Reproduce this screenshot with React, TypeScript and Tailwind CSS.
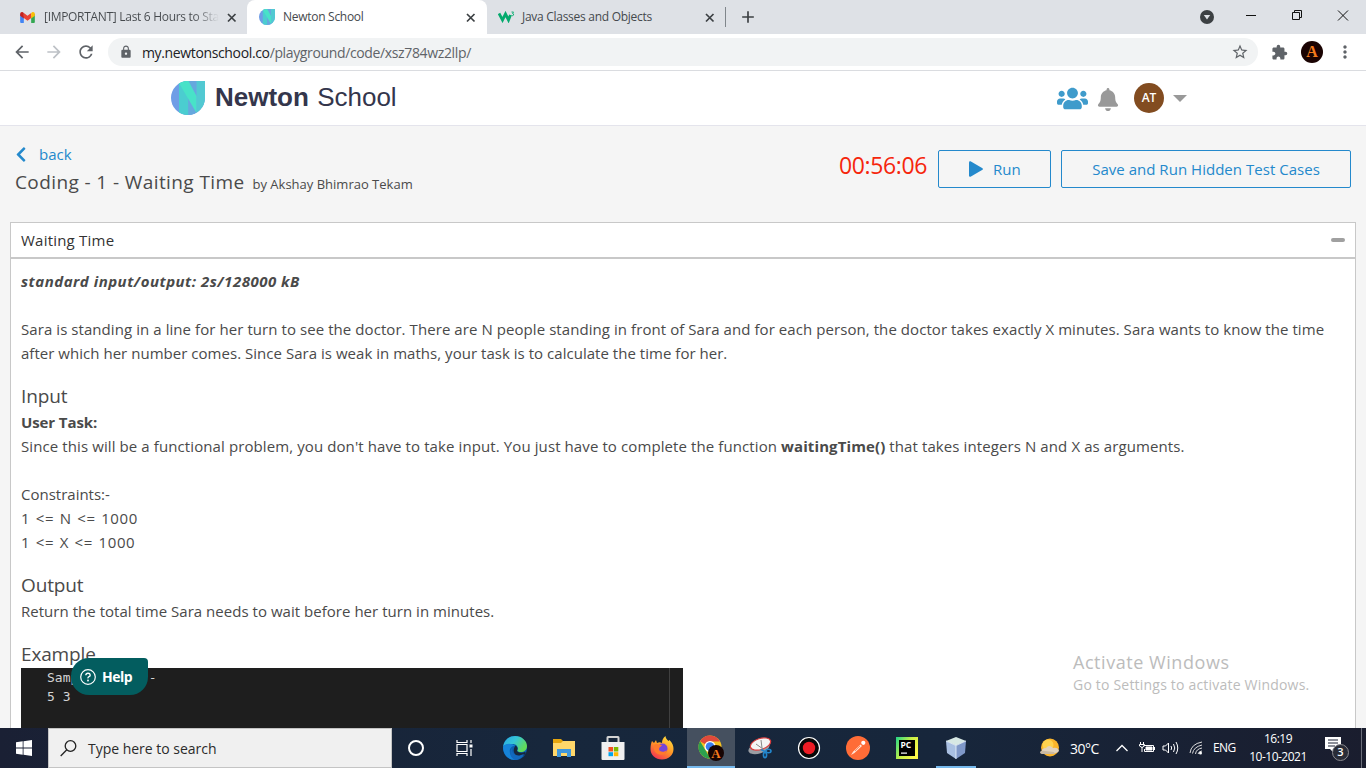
import React from 'react';
import { FaUsers, FaBell, FaChevronLeft } from 'react-icons/fa';
import { MdArrowBack, MdArrowForward, MdRefresh, MdLock, MdStarBorder, MdExtension, MdMoreVert, MdAdd } from 'react-icons/md';

function NewtonLogo({ className }: { className?: string }) {
  return (
    <svg viewBox="0 0 34 34" className={className}>
      <defs>
        <clipPath id="leaf"><path d="M17 0H34V17A17 17 0 1 1 17 0Z" /></clipPath>
      </defs>
      <g clipPath="url(#leaf)">
        <rect width="34" height="34" fill="#6f9de6" />
        <rect x="8" width="9.5" height="34" fill="#4bcdd0" />
        <rect x="17.5" width="8" height="34" fill="#66a8de" />
        <rect x="25.5" width="9" height="34" fill="#52c9d2" />
        <path d="M8 0H17.5L25.500 15V32L8 2Z" fill="#48e2c8" />
      </g>
    </svg>
  );
}

function GmailIcon() {
  return (
    <svg viewBox="0 0 16 12" className="h-[11px] w-[15px]">
      <path d="M0 2v9a1 1 0 0 0 1 1h3V5z" fill="#4285f4" />
      <path d="M16 2v9a1 1 0 0 1-1 1h-3V5z" fill="#34a853" />
      <path d="M4 1v5.5L8 9.5l4-3V1L8 4.2z" fill="#ea4335" />
      <path d="M0 2.2V4l4 3V1L2.9.4C1.500-.4 0 .6 0 2.200z" fill="#c5221f" />
      <path d="M16 2.200V4l-4 3V1l1.100-.6C14.500-.4 16 .6 16 2.200z" fill="#fbbc04" />
    </svg>
  );
}

function W3Icon() {
  return (
    <svg viewBox="0 0 17 12" className="h-3 w-[17px]" fill="none" stroke="#04aa6d">
      <path d="M1 2.500L4.500 9L7.500 3L10.500 9L12.500 4" strokeWidth="2.800" />
      <path d="M13.500 1h2l-1 1.500q1.600 0 1 1.500t-2 .4" strokeWidth=".9" />
    </svg>
  );
}

function TabClose() {
  return (
    <svg viewBox="0 0 13 13" className="h-[13px] w-[13px] shrink-0" fill="none" stroke="#3c4043" strokeWidth="1.700">
      <path d="M3 3l7.500 7.500M10.500 3L3 10.500" />
    </svg>
  );
}

function TabStrip() {
  return (
    <div className="flex h-[34px] bg-[#dee1e6] text-[12px] text-[#45494d]">
      <div className="flex w-[247px] items-center rounded-br-lg pl-[20px]">
        <GmailIcon />
        <div className="ml-[9px] w-[175px] overflow-hidden whitespace-nowrap bg-gradient-to-r from-[#45494d] from-85% to-[#dee1e6] bg-clip-text tracking-[-0.3px] text-transparent">[IMPORTANT] Last 6 Hours to Start</div>
        <div className="ml-[6px]"><TabClose /></div>
      </div>
      <div className="flex w-[240px] items-center rounded-t-lg bg-white pl-[12px]">
        <NewtonLogo className="h-4 w-4" />
        <div className="ml-[8px] w-[176px] whitespace-nowrap tracking-[-0.28px]">Newton School</div>
        <div className="ml-[5px]"><TabClose /></div>
      </div>
      <div className="flex w-[239px] items-center pl-[11px]">
        <W3Icon />
        <div className="ml-[7px] w-[176px] whitespace-nowrap tracking-[-0.28px]">Java Classes and Objects</div>
        <div className="ml-[5px]"><TabClose /></div>
        <div className="ml-[9px] h-5 w-px bg-[#80868b]" />
      </div>
      <div className="flex flex-1 items-center pl-[12px]">
        <MdAdd className="h-[20px] w-[20px] text-[#3c4043]" />
      </div>
      <div className="flex w-[176px] items-center pl-[10px]">
        <svg viewBox="0 0 14 14" className="h-[14px] w-[14px]">
          <circle cx="7" cy="7" r="7" fill="#3c4043" />
          <path d="M3.800 5h6.400L7 9.600z" fill="#dee1e6" />
        </svg>
        <svg viewBox="0 0 110 16" className="mb-[5px] ml-[30px] h-4 w-[110px]" fill="none" stroke="#111" strokeWidth="1">
          <path d="M2 8.500h10M48.500 5.500h7v7h-7zM50.500 5V3.500h7v7H56M94 3.500l10 10M104 3.500l-10 10" />
        </svg>
      </div>
    </div>
  );
}

function Toolbar() {
  return (
    <div className="flex h-[37px] items-center border-b border-[#dadce0] bg-white pl-[12px] text-[#5f6368]">
      <MdArrowBack className="h-5 w-5" />
      <MdArrowForward className="ml-[12px] h-5 w-5 text-[#bdc1c6]" />
      <MdRefresh className="ml-[12px] h-5 w-5" />
      <div className="ml-[12px] flex h-[28px] w-[1150px] items-center rounded-full bg-[#f1f3f4] pl-[11px] text-[14px]">
        <MdLock className="h-[14px] w-[14px]" />
        <div className="ml-[9px] whitespace-nowrap tracking-[-0.36px]"><span className="text-[#202124]">my.newtonschool.co</span>/playground/code/xsz784wz2llp/</div>
        <MdStarBorder className="ml-auto mr-[9px] h-[18px] w-[18px]" />
      </div>
      <MdExtension className="ml-[13px] h-[17px] w-[17px]" />
      <div className="ml-[13px] flex h-[22px] w-[22px] items-center justify-center rounded-full bg-[#1a0302] font-['Liberation_Serif',serif] text-[16px] leading-none font-bold text-[#f47a1c]">A</div>
      <MdMoreVert className="ml-[12px] h-5 w-5" />
    </div>
  );
}

function SiteHeader() {
  return (
    <div className="flex h-[55px] items-center border-b border-[#e4e4ec] bg-white pl-[171px]">
      <NewtonLogo className="h-[34px] w-[34px]" />
      <div className="ml-[10px] w-[842px] pb-[2px] font-['Liberation_Sans',sans-serif] text-[26px] leading-none whitespace-nowrap text-[#34364c]"><b>Newton</b> <span className="ml-px">School</span></div>
      <FaUsers className="h-[31px] w-[31px] text-[#3f9bcb]" />
      <FaBell className="mt-[2px] ml-[9px] h-[23px] w-[22px] text-[#999]" />
      <div className="ml-[15px] flex h-[30px] w-[30px] items-center justify-center rounded-full bg-[#824c20] text-[12px] font-semibold text-white">AT</div>
      <svg viewBox="0 0 14 7" className="ml-[9px] h-[7px] w-[14px]"><path d="M0 0h14L7 7z" fill="#999" /></svg>
    </div>
  );
}

function ActionBar() {
  return (
    <div className="flex h-[96px] px-[15px]">
      <div className="pt-[16px]">
        <div className="flex h-[24px] items-center text-[15px] text-[#2489cc]">
          <FaChevronLeft className="h-[17px] w-[12px]" />
          <span className="ml-[12px]">back</span>
        </div>
        <div className="flex h-[32px] items-baseline whitespace-nowrap text-[#4a4a4a]">
          <span className="text-[19px] leading-[32px] tracking-[0.4px]">Coding - 1 - Waiting Time</span>
          <span className="ml-[8px] text-[13px]">by Akshay Bhimrao Tekam</span>
        </div>
      </div>
      <div className="ml-auto flex pt-[24px]">
        <div className="w-[99px] text-[23px] leading-[30px] tracking-[-0.38px] whitespace-nowrap text-[#f5260c]">00:56:06</div>
        <button className="flex h-[38px] w-[113px] items-center rounded-[2px] border border-[#2489cc] pl-[30px] text-[15px] text-[#2489cc]">
          <svg viewBox="0 0 14 16" className="h-4 w-[14px]"><path d="M0 1.500Q0 0 1.500.300L13.500 7.200q.8.800 0 1.600L1.500 15.700Q0 16 0 14.500z" fill="#2489cc" /></svg>
          <span className="ml-[10px]">Run</span>
        </button>
        <button className="ml-[10px] h-[38px] w-[290px] rounded-[2px] border border-[#2489cc] text-[15px] tracking-[0.03px] whitespace-nowrap text-[#2489cc]">Save and Run Hidden Test Cases</button>
      </div>
    </div>
  );
}

function Heading({ children }: { children: React.ReactNode }) {
  return <h3 className="h-[45px] pt-[19px] text-[19px] leading-[24px] tracking-[-0.15px]">{children}</h3>;
}

function Problem() {
  return (
    <div className="mx-[10px] flex flex-1 flex-col overflow-hidden border-x border-t border-[#c8c8c8] bg-white">
      <div className="flex h-[36px] shrink-0 items-center border-b-2 border-[#c8c8c8] px-[10px] text-[15px] tracking-[0.22px] text-[#333]">
        <span>Waiting Time</span>
        <div className="mb-px ml-auto h-[4px] w-[14px] rounded-sm bg-[#a0a0a0]" />
      </div>
      <div className="px-[10px] pt-[10px] text-[15px] leading-[24px] whitespace-nowrap text-[#4a4a4a]">
        <p className="mb-6 font-bold tracking-[0.5px] italic">standard input/output: 2s/128000 kB</p>
        <p className="tracking-[0.07px]">Sara is standing in a line for her turn to see the doctor. There are N people standing in front of Sara and for each person, the doctor takes exactly X minutes. Sara wants to know the time</p>
        <p className="tracking-[0.03px]">after which her number comes. Since Sara is weak in maths, your task is to calculate the time for her.</p>
        <Heading>Input</Heading>
        <p className="font-bold tracking-[-0.1px]">User Task:</p>
        <p className="tracking-[0.1px]">Since this will be a functional problem, you don't have to take input. You just have to complete the function <b>waitingTime()</b> that takes integers N and X as arguments.</p>
        <p className="mt-6">Constraints:-</p>
        <p className="tracking-[0.6px] [word-spacing:1.1px]">1 &lt;= N &lt;= 1000</p>
        <p className="tracking-[0.6px] [word-spacing:1.1px]">1 &lt;= X &lt;= 1000</p>
        <Heading>Output</Heading>
        <p className="tracking-[0.03px]">Return the total time Sara needs to wait before her turn in minutes.</p>
        <Heading>Example</Heading>
        <div className="flex h-[60px] w-[662px] bg-[#1e1e1e]">
          <pre className="w-[649px] border-r border-[#404040] pl-[26px] font-['DejaVu_Sans_Mono',monospace] text-[13px] leading-[19px] text-[#d4d4d4]">{'Sample Input:-\n5 3'}</pre>
        </div>
      </div>
    </div>
  );
}

function EdgeIcon() {
  return (
    <svg viewBox="0 0 24 24" className="h-6 w-6">
      <defs>
        <linearGradient id="edgeTop" x1="0" y1="0" x2="1" y2=".5"><stop offset="0" stopColor="#2aa5e0" /><stop offset=".5" stopColor="#35c5d8" /><stop offset="1" stopColor="#62db58" /></linearGradient>
      </defs>
      <circle cx="12" cy="12" r="12" fill="#0b5fae" />
      <path d="M0 11C1 4 6 0 12 0c7 0 12 5 12 10 0 4-3 6-6 6-3 0-4-1-3.500-2 1-2 0-6-5-6C5 8 1 9 0 11z" fill="url(#edgeTop)" />
      <path d="M0 11c2-4 9-4 12-1-4 0-6 3-5 7 1 4 4 6.500 7 6.700C6 25 0 19 0 11z" fill="#1683d8" />
      <path d="M12.500 9.500c3 2 2 4 1.500 5 0 2 4 3 8 1.500l1 1c-2 3-5 4-8 3-4-1-6-6-2.500-10.500z" fill="#17273c" />
      <path d="M9 12c-1 5 4 9 9 7l3-1c-2 4-6 6-9 6-5-2-6-8-3-12z" fill="#1268bd" />
    </svg>
  );
}

function FolderIcon() {
  return (
    <svg viewBox="0 0 22 18" className="h-[18px] w-[22px]">
      <path d="M0 0h8l2 2h12v15H0z" fill="#e5a50e" />
      <path d="M0 4h8l2-2h12v15H0z" fill="#ffd76a" />
      <path d="M4 18v-8h14v8h-4v-4H8v4z" fill="#3f97dc" />
    </svg>
  );
}

function StoreIcon() {
  return (
    <svg viewBox="0 0 24 24" className="h-6 w-6">
      <path d="M6.500 7V1.500Q6.500 1 7 1H17Q17.500 1 17.500 1.500V7" fill="none" stroke="#d4d4d4" strokeWidth="2" />
      <path d="M.5 6h23v17q0 1-1 1h-21q-1 0-1-1z" fill="#f0f0f0" />
      <path d="M7.500 11H12v4.500H7.500z" fill="#f25022" /><path d="M12.800 11h4.500v4.500h-4.500z" fill="#7fba00" />
      <path d="M7.500 16.200H12v4H7.500z" fill="#00a4ef" /><path d="M12.800 16.200h4.500v4h-4.500z" fill="#ffb900" />
    </svg>
  );
}

function FirefoxIcon() {
  return (
    <svg viewBox="0 0 24 24" className="h-6 w-6">
      <defs><linearGradient id="fox" x1=".8" y1="0" x2=".2" y2="1"><stop offset="0" stopColor="#ffe23e" /><stop offset=".5" stopColor="#ff9426" /><stop offset="1" stopColor="#f22c55" /></linearGradient></defs>
      <path d="M2 5l2 2 2-3 1 3c2-1 3-1 5 0 0-3 1-5 3.500-7 0 2 1 3 3 5l1-1c3 3 4 6 4 9 0 6-5 10.500-11.500 10.500S.5 19 .5 13C.5 10 1 7 2 5z" fill="url(#fox)" />
      <circle cx="12.500" cy="12.500" r="5" fill="#7545d8" />
      <path d="M4 9c3-2 5 0 8 0-1 2-3 2-3 4 0 3 5 4 8 1-1 4-5 6-9 4-3-1-5-5-4-9z" fill="#ff7a2c" />
    </svg>
  );
}

function ChromeIcon() {
  return (
    <svg viewBox="0 0 26 26" className="h-[26px] w-[26px]">
      <circle cx="12" cy="12" r="11.500" fill="#f4c020" />
      <path d="M12 12L2 6.200A11.500 11.500 0 0 1 22 6.500H12z" fill="#e04a3c" />
      <path d="M2 6.200L8 16l4 7.500A11.500 11.500 0 0 1 2 6.200z" fill="#2da04e" />
      <circle cx="12" cy="11.500" r="5.500" fill="#fff" /><circle cx="12" cy="11.500" r="4.300" fill="#3b7ded" />
      <circle cx="18" cy="18" r="8" fill="#160403" />
      <text x="18" y="22.800" textAnchor="middle" fontSize="13" fontWeight="bold" fontFamily="Liberation Serif" fill="#f47a1c">A</text>
    </svg>
  );
}

function SnipIcon() {
  return (
    <svg viewBox="0 0 24 24" className="h-6 w-6">
      <ellipse cx="11" cy="12" rx="11" ry="5.500" transform="rotate(-18 11 12)" fill="#9a9da3" />
      <ellipse cx="12.500" cy="8" rx="10.500" ry="5.500" transform="rotate(-18 12.500 8)" fill="#f4f4f4" stroke="#d93c3c" strokeWidth="1.200" />
      <path d="M8 8l7 5M13 4l1 8" stroke="#888" strokeWidth="1" />
      <g fill="none" stroke="#2286cc" strokeWidth="1.600"><ellipse cx="20.500" cy="15" rx="2.500" ry="1.700" /><ellipse cx="17" cy="19" rx="1.600" ry="2.600" /><path d="M13 13.500l5 2.500" /></g>
    </svg>
  );
}

function RecordIcon() {
  return (
    <svg viewBox="0 0 24 24" className="h-6 w-6">
      <circle cx="12" cy="12" r="10.500" fill="#080808" stroke="#fff" strokeWidth="1.200" />
      <circle cx="12" cy="12" r="6.200" fill="#ed1c24" />
    </svg>
  );
}

function PostmanIcon() {
  return (
    <svg viewBox="0 0 24 24" className="h-6 w-6">
      <circle cx="12" cy="12" r="12" fill="#ff6c37" />
      <path d="M5 19l2-3.200 7.500-7.300 1.500 1.500-7.500 7z" fill="#ffe4d8" />
      <circle cx="17.300" cy="6.800" r="2.100" fill="#fff" /><path d="M9 15l5-5" stroke="#ff6c37" strokeWidth=".7" />
    </svg>
  );
}

function PycharmIcon() {
  return (
    <svg viewBox="0 0 22 22" className="h-[22px] w-[22px]">
      <defs><linearGradient id="pc" x1="0" y1="0" x2="1" y2=".6"><stop offset="0" stopColor="#21d789" /><stop offset=".55" stopColor="#c8ef45" /><stop offset="1" stopColor="#fcf84a" /></linearGradient></defs>
      <rect width="22" height="22" fill="url(#pc)" /><rect x="3" y="3" width="16" height="16" fill="#000" />
      <text x="4.500" y="11" fontSize="8.500" fontWeight="bold" fontFamily="Open Sans" fill="#fff">PC</text>
      <rect x="5" y="15.500" width="6" height="1.200" fill="#fff" />
    </svg>
  );
}

function CubeIcon() {
  return (
    <svg viewBox="0 0 22 24" className="h-6 w-[22px]">
      <path d="M11 1l10 4-10 4.500L1 5z" fill="#d7e8e4" /><path d="M1 5l10 4.500V23L2 17z" fill="#a9c0e2" />
      <path d="M21 5l-10 4.500V23l9-6z" fill="#7f98c8" /><path d="M1 5l10 4.500L21 5M11 9.500V23" fill="none" stroke="#eef6ff" strokeWidth=".8" />
    </svg>
  );
}

function AppSlot({ children }: { children: React.ReactNode }) {
  return <div className="flex h-10 w-[49px] items-center justify-center">{children}</div>;
}

function Taskbar() {
  return (
    <div className="flex h-10 items-center bg-[linear-gradient(90deg,#1a2034,#17273c_40%,#17263b_70%,#1a1d2e)] text-white">
      <div className="flex w-[48px] justify-center">
        <svg viewBox="0 0 16 16" className="h-4 w-4" fill="#fff"><path d="M0 2.300L6.700 1.300V7.600H0zM7.500 1.200L16 0v7.600H7.500zM0 8.400h6.700v6.300L0 13.700zM7.500 8.400H16V16l-8.500-1.200z" /></svg>
      </div>
      <div className="flex h-10 w-[344px] items-center border border-[#c4c4c4] bg-[#f0f0f0] pl-[11px] text-[#2b2b2b]">
        <svg viewBox="0 0 17 17" className="h-[17px] w-[17px]" fill="none" stroke="#222" strokeWidth="1.300"><circle cx="10.500" cy="6" r="5.300" /><path d="M6.800 9.800L.7 16" /></svg>
        <span className="ml-[11px] text-[14px] tracking-[-0.02px] whitespace-nowrap">Type here to search</span>
      </div>
      <div className="flex w-[48px] justify-center"><div className="h-4 w-4 rounded-full border-2 border-white" /></div>
      <div className="mr-[2px] flex w-[48px] justify-center">
        <svg viewBox="0 0 17 16" className="h-4 w-[17px]" fill="none" stroke="#fff" strokeWidth="1.200"><path d="M1 4.500h10v7H1zM1 0v2.500h10V0M1 16v-2.500h10V16M15 0v3M15 9v7" /><path d="M13.500 4.500h3v3h-3z" fill="#fff" stroke="none" /></svg>
      </div>
      <AppSlot><EdgeIcon /></AppSlot>
      <AppSlot><FolderIcon /></AppSlot>
      <AppSlot><StoreIcon /></AppSlot>
      <AppSlot><FirefoxIcon /></AppSlot>
      <div className="ml-px flex h-10 w-[48px] items-center justify-center border-y-2 border-t-[#45505f] border-b-[#76b9ed] bg-[#45505f]"><ChromeIcon /></div>
      <AppSlot><SnipIcon /></AppSlot>
      <AppSlot><RecordIcon /></AppSlot>
      <AppSlot><PostmanIcon /></AppSlot>
      <AppSlot><PycharmIcon /></AppSlot>
      <div className="ml-[5px] flex h-10 w-[40px] items-center justify-center border-y-2 border-t-transparent border-b-[#76b9ed]"><CubeIcon /></div>
      <div className="ml-auto flex h-10 items-center whitespace-nowrap">
        <svg viewBox="0 0 20 20" className="h-5 w-5"><circle cx="10" cy="9.500" r="9" fill="#fbb52c" /><circle cx="8" cy="7" r="5.500" fill="#ffd34f" /><path d="M2 14q-1-4 4-4 3-4 7 0 5-1 6 3-1 2-4 2z" fill="#e2d3bd" /><path d="M0 14q1-2 5-1l9 1 1 2H3q-3 0-3-2z" fill="#c9b9a2" /></svg>
        <span className="ml-[10px] w-[46px] text-[14px] tracking-[-0.5px]">30°C</span>
        <svg viewBox="0 0 12 8" className="h-2 w-3" fill="none" stroke="#fff" strokeWidth="1.300"><path d="M.5 7L6 1.500 11.500 7" /></svg>
        <svg viewBox="0 0 16 14" className="ml-[11px] h-[14px] w-4" fill="none" stroke="#fff"><path d="M4.500 4.500h10v6h-9V8" /><path d="M7 6h6v3H7z" fill="#fff" /><path d="M15.500 6v3M1.500 1v2M4.500 1v2M.5 3.500h5v1.500L3 6.500.5 5zM3 6v5" /></svg>
        <svg viewBox="0 0 17 14" className="ml-[7px] h-[14px] w-[17px]" fill="none" stroke="#fff"><path d="M1 5h2.500L6.500 2v10L3.500 9H1zM9 5q1.300 2 0 4M11.500 3q2.500 4 0 8M14 1q3.500 6 0 12" /></svg>
        <svg viewBox="0 0 14 14" className="ml-[10px] h-[14px] w-[14px]" fill="none" stroke="#ddd"><path d="M1 12Q2 3 13 1M3.500 12.500Q4.500 6 13 4M6.500 13Q7 8 13 7M9 13q1-3 4-3" /><circle cx="11.500" cy="12" r="1.500" fill="#fff" stroke="none" /></svg>
        <span className="ml-[10px] w-[35px] text-[12px] tracking-[-0.6px]">ENG</span>
        <div className="w-[60px] text-center text-[12px] leading-[18px] tracking-[-0.5px]"><div>16:19</div><div>10-10-2021</div></div>
        <div className="relative mt-px ml-[17px] h-6 w-[24px]">
          <svg viewBox="0 0 16 15" className="h-[15px] w-4"><path d="M0 0h16v12H8v3l-3-3H0z" fill="#fff" /><path d="M3 3h10M3 6h10M3 9h7" stroke="#1a2034" /></svg>
          <div className="absolute top-[7px] left-[7px] flex h-[17px] w-[17px] items-center justify-center rounded-full border border-[#8a8a90] bg-[#292c37] text-[11px] font-semibold">3</div>
        </div>
        <div className="mr-[4px] ml-[12px] h-10 w-px bg-[#6b6e7a]" />
      </div>
    </div>
  );
}

export default function App() {
  return (
    <div className="relative flex h-screen w-screen flex-col overflow-hidden bg-[#f5f5f5] font-['Open_Sans',sans-serif]">
      <TabStrip />
      <Toolbar />
      <SiteHeader />
      <ActionBar />
      <Problem />
      <Taskbar />
      <div className="absolute top-[658px] left-[71px] flex h-[37px] w-[77px] items-center rounded-[18px] rounded-tr-[4px] bg-[#035d5f] pl-[9px] text-white">
        <svg viewBox="0 0 16 16" className="h-4 w-4" fill="none" stroke="#fff" strokeWidth="1.200"><circle cx="8" cy="8" r="7.300" /><path d="M5.800 6.300q.2-2 2.200-2t2.200 1.700q0 1.200-1.200 1.700T8 9.300" strokeWidth="1.400" /><circle cx="8" cy="11.500" r=".4" /></svg>
        <span className="mb-px ml-[6px] text-[14px] font-bold tracking-[-0.5px]">Help</span>
      </div>
      <div className="absolute top-[650px] left-[1073px] whitespace-nowrap text-[#bcbcbc]">
        <div className="text-[18px] leading-[25px] tracking-[0.55px]">Activate Windows</div>
        <div className="text-[14px] leading-[20px] tracking-[0.2px]">Go to Settings to activate Windows.</div>
      </div>
    </div>
  );
}
